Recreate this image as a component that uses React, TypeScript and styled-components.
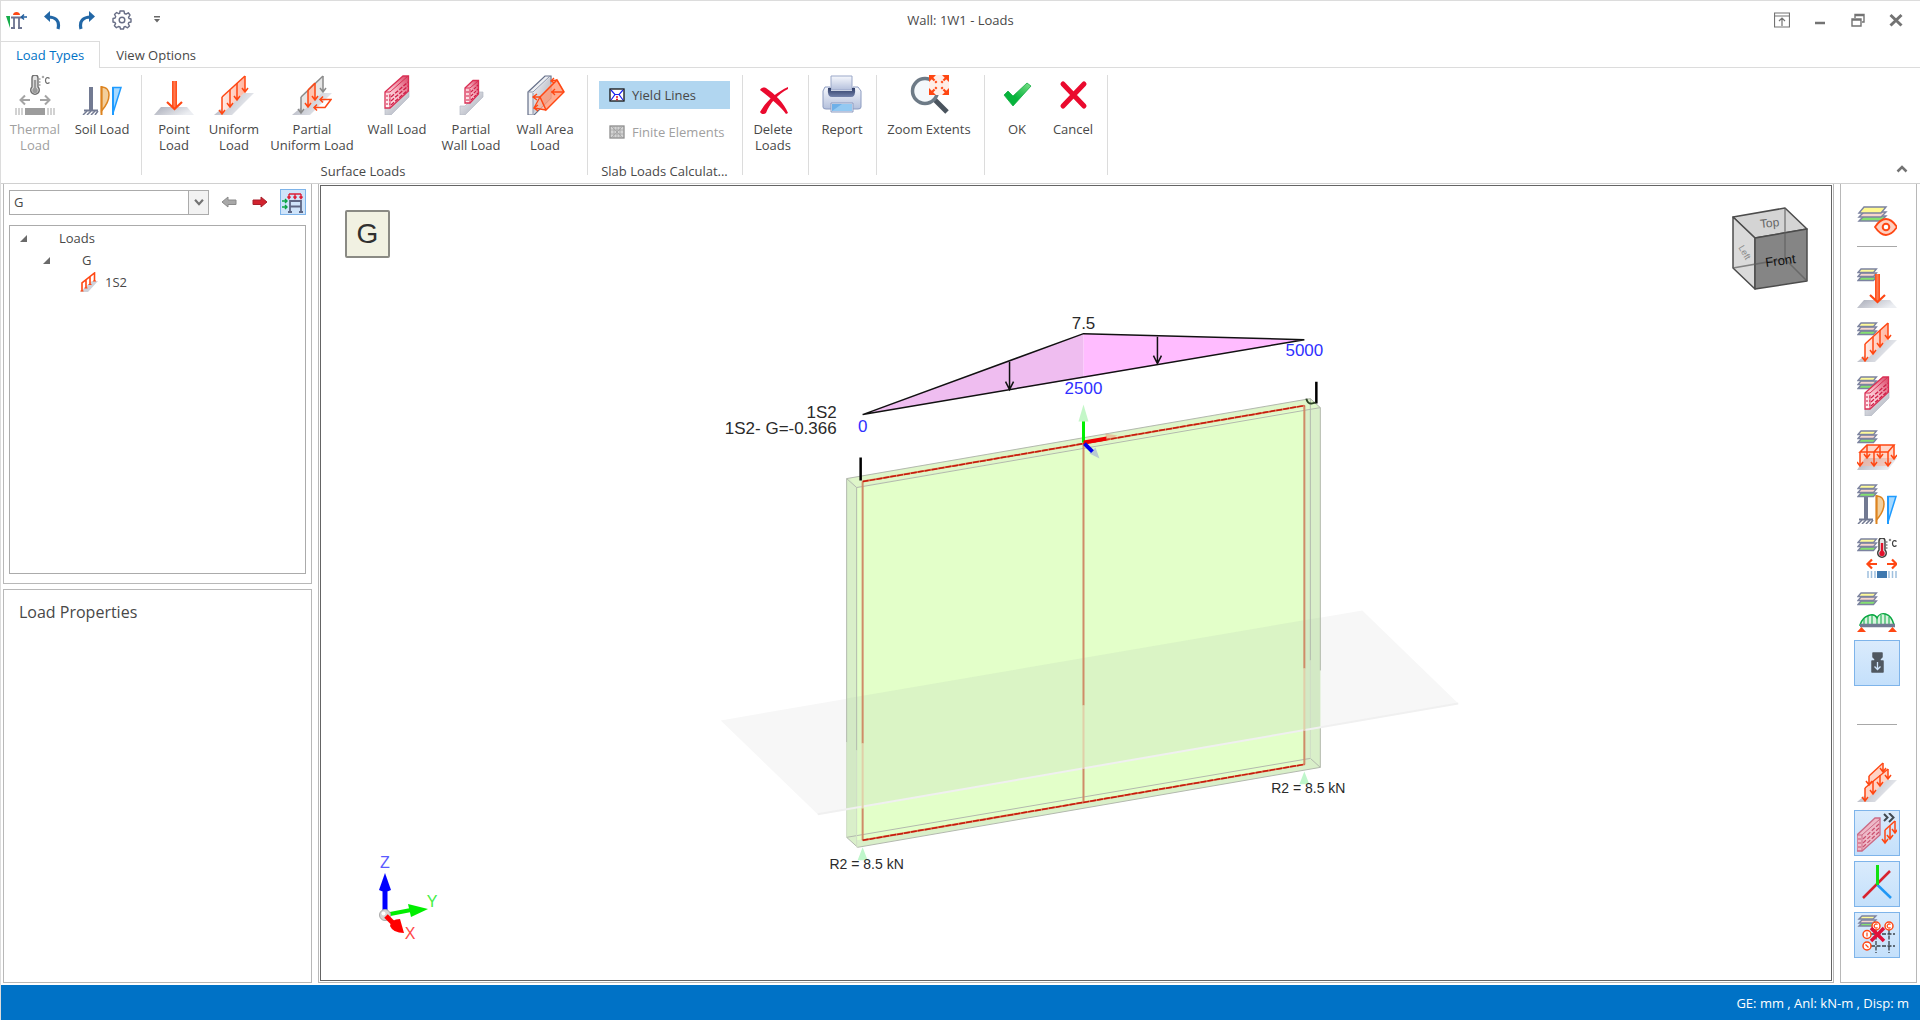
import React from "react";
import styled, { createGlobalStyle, css } from "styled-components";

const GlobalStyle = createGlobalStyle`
  *, *::before, *::after { box-sizing: border-box; }
  body {
    margin: 0;
    background: #ffffff;
    color: #484848;
    font-family: "Open Sans", "Noto Sans", sans-serif;
    font-size: 13px;
    line-height: 16px;
  }
  button, select { font: inherit; color: inherit; }
  svg { flex: none; }
`;

/* ---------- Window frame ---------- */

const Window = styled.div`
  display: flex;
  flex-direction: column;
  min-height: 100vh;
  border-top: 1px solid #dcdcdc;
  border-left: 1px solid #dcdcdc;
`;

const TitleBar = styled.header`
  display: grid;
  grid-template-columns: 1fr auto 1fr;
  align-items: center;
  height: 40px;
  padding: 0 12px 2px 4px;
`;

const QuickAccess = styled.div`
  display: flex;
  align-items: center;
  gap: 11px;
`;

const WindowTitle = styled.h1`
  margin: 0;
  padding-left: 8px;
  font-size: 13px;
  font-weight: 400;
  line-height: 16px;
`;

const WindowControls = styled.div`
  display: flex;
  justify-content: flex-end;
  gap: 14px;
`;

const FlatButton = styled.button`
  display: grid;
  place-items: center;
  width: 24px;
  height: 24px;
  padding: 0;
  border: 0;
  background: transparent;
`;

const TabStrip = styled.nav`
  display: flex;
  height: 27px;
  border-bottom: 1px solid #dcdcdc;
`;

const Tab = styled.button<{ $active?: boolean }>`
  height: 27px;
  padding: 0 16px;
  border: 0;
  background: transparent;
  ${(p) =>
    p.$active &&
    css`
      padding: 0 15px;
      border: solid #dcdcdc;
      border-width: 1px 1px 0 0;
      background: #ffffff;
      color: #0072c6;
    `}
`;

/* ---------- Ribbon ---------- */

const Ribbon = styled.section`
  display: flex;
  height: 116px;
  padding-top: 7px;
  border-bottom: 1px solid #d0d0d0;
`;

const Group = styled.div<{ $pad: string }>`
  display: flex;
  flex-direction: column;
  height: 104px;
  padding: ${(p) => p.$pad};
`;

const GroupButtons = styled.div`
  display: flex;
  flex: 1;
  align-items: flex-start;
`;

const GroupStack = styled.div`
  display: flex;
  flex: 1;
  flex-direction: column;
  gap: 9px;
  width: 131px;
  padding-top: 6px;
`;

const Caption = styled.div`
  text-align: center;
  white-space: nowrap;
`;

const Divider = styled.div`
  width: 1px;
  height: 100px;
  background: #dcdcdc;
`;

const LargeButton = styled.button<{ $width: number }>`
  display: flex;
  flex-direction: column;
  align-items: center;
  gap: 6px;
  width: ${(p) => p.$width}px;
  padding: 0;
  border: 0;
  background: transparent;
  line-height: 16px;
  white-space: pre;
  &:disabled { color: #a0a0a0; }
`;

const SmallButton = styled.button<{ $active?: boolean }>`
  display: flex;
  align-items: center;
  gap: 7px;
  height: 28px;
  padding: 0 0 0 10px;
  border: 0;
  background: ${(p) => (p.$active ? "#b1d6f0" : "transparent")};
  white-space: nowrap;
  &:disabled { color: #a0a0a0; }
`;

const CollapseSlot = styled.div`
  display: flex;
  flex: 1;
  align-items: flex-end;
  justify-content: flex-end;
  padding: 0 6px 2px 0;
`;

/* ---------- Work area ---------- */

const WorkArea = styled.main`
  display: flex;
  flex: 1;
  padding: 0 3px 2px 2px;
`;

const Sidebar = styled.aside`
  display: flex;
  flex: none;
  flex-direction: column;
  gap: 5px;
  width: 309px;
`;

const Panel = styled.section`
  border: 1px solid #b8b8b8;
`;

const LoadPanel = styled(Panel)`
  display: flex;
  flex: 405;
  flex-direction: column;
  gap: 10px;
  padding: 5px 5px 9px;
  border-top: 0;
`;

const PropertiesPanel = styled(Panel)`
  flex: 390;
  padding: 11px 15px;
`;

const PanelTitle = styled.h2`
  margin: 0;
  font-size: 16px;
  font-weight: 400;
  line-height: 22px;
`;

const CaseBar = styled.div`
  display: flex;
  align-items: center;
  gap: 10px;
`;

const ComboBox = styled.div`
  position: relative;
  flex: none;
  width: 200px;
  height: 25px;
  border: 1px solid #ababab;
`;

const ComboSelect = styled.select`
  width: 100%;
  height: 100%;
  padding: 0 4px;
  border: 0;
  background: #ffffff;
  appearance: none;
`;

const ComboArrow = styled.span`
  position: absolute;
  top: 0;
  right: 0;
  display: grid;
  place-items: center;
  width: 20px;
  height: 100%;
  border-left: 1px solid #ababab;
  background: #f2f2f2;
  pointer-events: none;
`;

const ToggleButton = styled(FlatButton)`
  flex: none;
  width: 26px;
  height: 26px;
  margin-left: auto;
  border: 1px solid #7eb4ea;
  background: #cfe4fa;
`;

const Tree = styled.ul`
  flex: 1;
  margin: 0;
  padding: 1px 0;
  border: 1px solid #ababab;
  list-style: none;
`;

const TreeRow = styled.li<{ $level: number }>`
  display: flex;
  align-items: center;
  gap: ${(p) => (p.$level === 2 ? 6 : 32)}px;
  height: 22px;
  padding-left: ${(p) => [9, 32, 69][p.$level]}px;
`;

const ViewFrame = styled.section`
  position: relative;
  flex: 1;
  display: flex;
  min-width: 0;
  margin: 0 6px;
  padding: 1px;
  border: 1px solid #b8b8b8;
  border-top: 0;
`;

const Viewport = styled.div`
  position: relative;
  flex: 1;
  min-width: 0;
  border: 1px solid #646464;
`;

const Scene = styled.svg`
  position: absolute;
  inset: 0;
  width: 100%;
  height: 100%;
`;

const CaseBadge = styled.div`
  position: absolute;
  top: 24px;
  left: 24px;
  display: grid;
  place-items: center;
  width: 45px;
  height: 48px;
  border: 2px solid #8a8a84;
  border-radius: 2px;
  background: #f1f1e2;
  color: #303030;
  font-family: "Liberation Sans", Arial, sans-serif;
  font-size: 28px;
  line-height: 32px;
`;

const CubeOverlay = styled.svg`
  position: absolute;
  top: 18px;
  right: 22px;
`;

const TriadOverlay = styled.svg`
  position: absolute;
  bottom: 34px;
  left: 50px;
`;

/* ---------- Right toolbar ---------- */

const ToolPanel = styled(Panel)`
  display: flex;
  flex: none;
  flex-direction: column;
  align-items: center;
  width: 77px;
  padding: 14px 3px 0 0;
  border-top: 0;
`;

const ToolGroup = styled.div<{ $gap: number }>`
  display: flex;
  flex-direction: column;
  gap: ${(p) => p.$gap}px;
  & + & { margin-top: 5px; }
`;

const ToolRule = styled.hr<{ $space: string }>`
  width: 40px;
  height: 1px;
  margin: ${(p) => p.$space};
  border: 0;
  background: #a8a8a8;
`;

const ToolButton = styled.button<{ $active?: boolean }>`
  display: grid;
  place-items: center;
  width: 46px;
  height: 46px;
  padding: 0;
  border: 1px solid ${(p) => (p.$active ? "#7eb4ea" : "transparent")};
  background: ${(p) => (p.$active ? "linear-gradient(#daebfc, #c4e0fb)" : "transparent")};
`;

const StatusBar = styled.footer`
  display: flex;
  align-items: center;
  justify-content: flex-end;
  height: 35px;
  padding: 0 11px;
  background: #0072c6;
  color: #ffffff;
`;

/* ---------- Icon parts ---------- */

const ORANGE = "#ff4713";
const ICON_FONT = '"Liberation Sans", Arial, sans-serif';

const Icon = ({ size = 40, children }: { size?: number; children: React.ReactNode }) => (
  <svg width={size} height={size} viewBox="0 0 40 40" fill="none" aria-hidden="true">
    {children}
  </svg>
);

const HiddenSvg = styled.svg`
  position: absolute;
`;

const SharedDefs = () => (
  <HiddenSvg width="0" height="0" aria-hidden="true">
    <defs>
      <linearGradient id="plate" x1="0" x2="1" y1="0" y2="0.4">
        <stop offset="0" stopColor="#a9acb8" />
        <stop offset="1" stopColor="#eceef2" />
      </linearGradient>
      <linearGradient id="brick" x1="0" x2="1" y1="1" y2="0">
        <stop offset="0" stopColor="#ffffff" />
        <stop offset="0.5" stopColor="#f7b4c2" />
        <stop offset="1" stopColor="#d94666" />
      </linearGradient>
      <linearGradient id="steel" x1="0" x2="1" y1="0" y2="1">
        <stop offset="0" stopColor="#f4f5f8" />
        <stop offset="1" stopColor="#a4a8b4" />
      </linearGradient>
      <linearGradient id="fade" x1="0" x2="1">
        <stop offset="0" stopColor="#ff4713" stopOpacity="0.1" />
        <stop offset="1" stopColor="#ff4713" stopOpacity="0.4" />
      </linearGradient>
      <linearGradient id="shaft" x1="0" x2="1">
        <stop offset="0" stopColor="#ff4713" />
        <stop offset="0.5" stopColor="#ff7a50" />
        <stop offset="1" stopColor="#ff4713" />
      </linearGradient>
      <linearGradient id="tick" x1="0" x2="1" y1="1" y2="0">
        <stop offset="0.4" stopColor="#06b43c" />
        <stop offset="1" stopColor="#7fe08a" />
      </linearGradient>
      <linearGradient id="print" x1="0" x2="0" y1="0" y2="1">
        <stop offset="0" stopColor="#f6f8fd" />
        <stop offset="1" stopColor="#b4c0dc" />
      </linearGradient>
      <linearGradient id="roller" x1="0" x2="0" y1="0" y2="1">
        <stop offset="0" stopColor="#2d3c66" />
        <stop offset="1" stopColor="#7382ab" />
      </linearGradient>
    </defs>
  </HiddenSvg>
);

const DownArrow = ({ x, y1, y2, color = ORANGE }: { x: number; y1: number; y2: number; color?: string }) => (
  <path d={`M${x} ${y1}V${y2}M${x - 3} ${y2 - 4}L${x} ${y2}L${x + 3} ${y2 - 4}`} stroke={color} strokeWidth="1.5" />
);

const Layers = () => (
  <g stroke="#7c83a0" strokeWidth="1.3">
    <path d="M1 12.500L4 9H19.500L16.500 12.500Z" fill="#84e070" />
    <path d="M1 8.500L4 5H19.500L16.500 8.500Z" fill="#f6d6cc" />
    <path d="M1 4.500L4 1H19.500L16.500 4.500Z" fill="#fffb9a" />
  </g>
);

const LineLoad = () => (
  <g>
    <path d="M0 40L26 18H40L18 40Z" fill="url(#plate)" />
    <path d="M8 22L31 1V17L8 39Z" fill="#fff" />
    <path d="M8 22L31 1V17L8 39Z" fill="url(#fade)" />
    <path d="M8 22L31 1" stroke={ORANGE} strokeWidth="1.5" />
    <DownArrow x={8} y1={22} y2={39} />
    <DownArrow x={16} y1={15} y2={32} />
    <DownArrow x={23} y1={8} y2={25} />
    <DownArrow x={31} y1={1} y2={17} />
  </g>
);

const BrickWall = () => (
  <g>
    <path d="M8 33L12 34L32 16V22L14 40H8Z" fill="url(#steel)" stroke="#b6bac6" strokeWidth="0.7" />
    <path d="M8 17L26 1H31.500V16L13 33H8Z" fill="url(#brick)" stroke="#d92f54" strokeWidth="1.3" />
    <path d="M13 19V33M8 17H13L31 1" stroke="#d92f54" />
    <path d="M14 22L31 7M14 26L31 11M14 30L31 15" stroke="#cf1f48" strokeWidth="1.3" strokeDasharray="4 1.5" />
    <path d="M9 21H13M9 25H13M9 29H13" stroke="#cf1f48" strokeDasharray="2 1" />
  </g>
);

const SoilShapes = () => (
  <g>
    <path d="M9 12V35" stroke="#727a92" strokeWidth="4" />
    <path d="M2 35.500H16" stroke="#727a92" strokeWidth="2" />
    <path d="M5 36L1 40M9 36L5 40M13 36L9 40M16 36L13 40" stroke="#727a92" strokeWidth="1.5" />
    <path d="M19.500 12C25 12 27 16 27 20C27 26 23 32 19.500 36V12Z" fill="#f3cf9c" stroke="#dd8420" strokeWidth="1.5" />
    <path d="M19.500 11V40" stroke="#dd8420" strokeWidth="2" />
    <path d="M31 12.500H39L31 38Z" fill="#a6d9ff" stroke="#1e9bff" strokeWidth="1.5" />
    <path d="M31 12V40" stroke="#1e9bff" strokeWidth="2" />
  </g>
);

const Thermometer = ({ x, fluid, line }: { x: number; fluid: string; line: string }) => (
  <g>
    <path
      d={`M${x - 3} 3A3 3 0 0 1 ${x + 3} 3V12A4.300 4.300 0 1 1 ${x - 3} 12Z`}
      fill="#e4e4e4"
      stroke={line}
      strokeWidth="1.400"
    />
    <path d={`M${x} 5V15`} stroke={fluid} strokeWidth="2.400" />
    <circle cx={x} cy="15.500" r="2.700" fill={fluid} />
    <path d={`M${x + 4} 4H${x + 5.5}M${x + 4} 7H${x + 5.5}M${x + 4} 10H${x + 5.5}`} stroke={line} />
    <circle cx={x + 8} cy="2" r="0.800" stroke={line} strokeWidth="0.700" />
    <path d={`M${x + 14.5} 3.500C${x + 12.5} 1.500 ${x + 10.5} 3 ${x + 10.5} 5.500C${x + 10.5} 8 ${x + 12.5} 9.500 ${x + 14.5} 7.500`} stroke={line} strokeWidth="1.200" />
  </g>
);

const ThermalIcon = () => (
  <Icon>
    <Thermometer x={20} fluid="#9a9a9a" line="#6e6e6e" />
    <path d="M15 25H6M10 20.500L5.500 25L10 29.500M25 25H34M30 20.500L34.500 25L30 29.500" stroke="#a4a4a4" strokeWidth="2" />
    <path d="M10 36.500H30" stroke="#9c9c9c" strokeWidth="7" />
    <path d="M1 33V40M4 33V40M7 33V40M33 33V40M36 33V40M39 33V40" stroke="#c4c4c4" strokeWidth="1.500" />
  </Icon>
);

const SoilIcon = () => (
  <Icon>
    <SoilShapes />
  </Icon>
);

const PointShapes = () => (
  <g>
    <path d="M7 32H33L40 40H0Z" fill="url(#plate)" />
    <path d="M18 6H23V33H18Z" fill="url(#shaft)" />
    <path d="M13 27L20.500 34L28 27" stroke={ORANGE} strokeWidth="2.200" />
  </g>
);

const PointIcon = () => (
  <Icon>
    <PointShapes />
  </Icon>
);

const UniformIcon = ({ size = 40 }: { size?: number }) => (
  <Icon size={size}>
    <LineLoad />
  </Icon>
);

/* Same load at tree size, with heavier strokes so it stays legible. */
const TreeLoadIcon = () => (
  <svg width="20" height="20" viewBox="0 0 20 20" fill="none" aria-hidden="true">
    <path d="M1 20L13 9H19L9 20Z" fill="#cfd2da" />
    <path d="M3 19V11L15.500 1V9M7 16V8M11 13V5" stroke={ORANGE} strokeWidth="1.600" />
    <path d="M1.500 19H4.500M5.500 16H8.500M9.500 12.500H12.500M14 9H17" stroke={ORANGE} />
  </svg>
);

const PartialUniformIcon = () => (
  <Icon>
    <path d="M0 40L26 18H40L18 40Z" fill="url(#plate)" />
    <path d="M9 22L31 1V17L9 38Z" fill="#e6e6e6" />
    <path d="M16 15L23 8V25L16 32Z" fill="#ffc3b0" />
    <path d="M9 22L31 1" stroke="#8a8a8a" strokeWidth="1.500" />
    <path d="M16 15L23 8" stroke={ORANGE} strokeWidth="1.500" />
    <DownArrow x={9} y1={22} y2={38} color="#8a8a8a" />
    <DownArrow x={31} y1={1} y2={17} color="#8a8a8a" />
    <DownArrow x={16} y1={15} y2={32} />
    <DownArrow x={23} y1={8} y2={25} />
    <path d="M28 24.500H39L33 32.500H22M31 21.500L28 24.500L31 27.500M25 29.500L22 32.500L25 35.500" stroke={ORANGE} strokeWidth="1.500" />
  </Icon>
);

const WallLoadIcon = () => (
  <Icon>
    <BrickWall />
  </Icon>
);

const PartialWallIcon = () => (
  <Icon>
    <path d="M9 31H14L28 17H32V22L14 40H9Z" fill="url(#steel)" stroke="#b6bac6" strokeWidth="0.700" />
    <path d="M14 13L22 5.500H27.500V19L19 28H14Z" fill="url(#brick)" stroke="#d92f54" strokeWidth="1.300" />
    <path d="M14 13H19L27 6M19 14V28" stroke="#d92f54" />
    <path d="M20 17L27 10M20 21L27 14M20 25L27 18M15 17H19M15 21H19M15 25H19" stroke="#cf1f48" strokeWidth="1.200" strokeDasharray="3 1" />
  </Icon>
);

const WallAreaIcon = () => (
  <Icon>
    <path d="M3 17L20 1H26V23L9 40H3Z" fill="#eef0f4" stroke="#667089" strokeWidth="1.200" />
    <path d="M8 18L25 2V23L8 39Z" fill="url(#steel)" />
    <path d="M8 18V39M3 17H8L25 1" stroke="#8e96aa" />
    <path d="M15 22L28 6L33 5L39 17L21 35L9 33Z" fill="#ffb297" fillOpacity="0.700" />
    <path d="M15 22L32 5L39 17L21 35Z" fill="#ff8a63" fillOpacity="0.450" stroke={ORANGE} strokeWidth="1.500" />
    <path d="M15 22H8M21 35L9 33L15 22M32 5L26 6M39 17H26M12 19L8 22L12 25M13 30L9 33L13 36M29 3L26 6L29 8M30 14L27 17L30 20" stroke={ORANGE} strokeWidth="1.300" />
  </Icon>
);

const YieldIcon = () => (
  <svg width="16" height="16" viewBox="0 0 16 16" fill="none" aria-hidden="true">
    <rect x="1" y="2" width="14" height="12" fill="#fff" stroke="#111" strokeWidth="1.300" />
    <path d="M2 3L6 7.500L2 13M14 3L10 7.500L14 13M6 7.500H10" stroke="#1d22f0" strokeWidth="1.200" />
    <path d="M8 9V11M7 12.500H9" stroke="#e3122c" strokeWidth="1.500" />
  </svg>
);

const MeshIcon = () => (
  <svg width="16" height="16" viewBox="0 0 16 16" fill="none" aria-hidden="true">
    <rect x="1" y="2" width="14" height="12" fill="#d4d4d4" stroke="#8e8e8e" strokeWidth="1.300" />
    <path d="M1 6H15M1 10H15M5 2V14M8 2V14M11 2V14M2 2L14 14M14 2L2 14" stroke="#9e9e9e" strokeWidth="0.700" />
  </svg>
);

const DeleteIcon = () => (
  <Icon>
    <path d="M7 15C8 13 10 12 13 13C22 19 31 28 35 38L33 39C27 31 17 23 7 15Z" fill="#ea0a2e" />
    <path d="M35 12C24 17 14 25 7 37C8 39 11 40 13 38C17 28 25 19 35 14Z" fill="#ea0a2e" />
  </Icon>
);

const PrinterIcon = () => (
  <Icon>
    <path d="M3 12H8V21H31V12H36L39 16V32Q39 34 36 34H4Q1 34 1 32V16Z" fill="url(#print)" stroke="#8c9bc0" />
    <path d="M9 1H30V15H9Z" fill="url(#print)" stroke="#9aa7c8" />
    <path d="M6 13H9V16H30V13H33Q34 22 29 22H10Q5 22 6 13Z" fill="url(#roller)" />
    <path d="M9 28H31V37H9Z" fill="#e9eefa" stroke="#8c9bc0" />
    <path d="M10 29H30V36H10Z" fill="#6eb0e8" />
    <path d="M10 36L20 29H30V36Z" fill="#93c9f2" />
  </Icon>
);

const ZoomIcon = () => (
  <Icon>
    <path d="M25 24L38 37" stroke="#4a545e" strokeWidth="5" />
    <circle cx="16" cy="16" r="12.500" fill="#f4f8fb" stroke="#6d7a86" strokeWidth="3.500" />
    <path d="M20 0H40V20H20Z" fill="#ffeee8" />
    <path d="M20 0H27L20 7ZM40 0H33L40 7ZM20 20H27L20 13ZM40 20H33L40 13Z" fill={ORANGE} />
    <path d="M22 2L28 8M38 2L32 8M22 18L28 12M38 18L32 12" stroke={ORANGE} strokeWidth="2.200" strokeDasharray="5 1 2" />
  </Icon>
);

const OkIcon = () => (
  <Icon>
    <path d="M7 20L11 16L16 21L30 8L34 11L16 31Z" fill="url(#tick)" stroke="#14ad43" strokeWidth="0.800" />
  </Icon>
);

const CancelIcon = () => (
  <Icon>
    <path d="M10 9L31 31M31 9L10 31" stroke="#ea0a2e" strokeWidth="5" strokeLinecap="round" />
  </Icon>
);

/* ---------- Right toolbar icons ---------- */

const LayersEyeIcon = () => (
  <Icon>
    <g stroke="#7c83a0" strokeWidth="1.400">
      <path d="M2 20L7 15H29L24 20Z" fill="#84e070" />
      <path d="M2 16L7 11H29L24 16Z" fill="#f6d6cc" />
      <path d="M2 12L7 6H29L24 12Z" fill="#fff98f" />
    </g>
    <path d="M18 26C22 20 25 18 29 18S36 20 40 26C36 32 33 34 29 34S22 32 18 26Z" fill="#ffd0c0" stroke={ORANGE} strokeWidth="1.800" />
    <circle cx="29" cy="26" r="3.300" fill="#fff" stroke={ORANGE} strokeWidth="2" />
  </Icon>
);

const LayersPointIcon = () => (
  <Icon>
    <Layers />
    <PointShapes />
  </Icon>
);

const LayersUniformIcon = () => (
  <Icon>
    <Layers />
    <LineLoad />
  </Icon>
);

const LayersWallIcon = () => (
  <Icon>
    <Layers />
    <BrickWall />
  </Icon>
);

const LayersSlabIcon = () => (
  <Icon>
    <Layers />
    <path d="M0 40L8 28H40L31 40Z" fill="url(#plate)" />
    <path d="M3 22L10 15H37V29L31 36H3Z" fill="#ffb59d" fillOpacity="0.550" />
    <path d="M3 22L10 15H37L31 22ZM17 22L23 15" stroke={ORANGE} strokeWidth="1.500" />
    <DownArrow x={3} y1={22} y2={36} />
    <DownArrow x={17} y1={22} y2={36} />
    <DownArrow x={31} y1={22} y2={36} />
    <DownArrow x={10} y1={15} y2={28} />
    <DownArrow x={23} y1={15} y2={28} />
    <DownArrow x={37} y1={15} y2={29} />
  </Icon>
);

const LayersSoilIcon = () => (
  <Icon>
    <SoilShapes />
    <Layers />
  </Icon>
);

const LayersThermalIcon = () => (
  <Icon>
    <Layers />
    <Thermometer x={25} fluid="#e3122c" line="#3c3c3c" />
    <path d="M20 26H11M15 21.500L10.500 26L15 30.500M30 26H39M35 21.500L39.500 26L35 30.500" stroke={ORANGE} strokeWidth="2.200" />
    <path d="M20 36.500H30" stroke="#3f78ae" strokeWidth="7" />
    <path d="M11 33V40M14.500 33V40M18 33V40M32 33V40M35.500 33V40M39 33V40" stroke="#9fc0de" strokeWidth="1.500" />
  </Icon>
);

const LayersBridgeIcon = () => (
  <Icon>
    <Layers />
    <path d="M3 33C6 23 17 20 20 26C23 19 34 20 37 33Z" fill="#d8f3de" stroke="#0aa842" strokeWidth="1.500" />
    <path d="M7 27V33M11 24V33M15 23V33M20 26V33M24 23V33M28 22V33M32 25V33" stroke="#0aa842" />
    <path d="M3 33.500H38" stroke="#727a92" strokeWidth="3.500" />
    <path d="M0 40L4.500 35L9 40ZM31 40L35.500 35L40 40Z" fill={ORANGE} />
  </Icon>
);

const WeightIcon = () => (
  <Icon>
    <path d="M16 10H25V14L23 16V18H26V29H15V18H18V16L16 14Z" fill="#505860" stroke="#505860" strokeWidth="1.500" strokeLinejoin="round" />
    <path d="M20.500 19V26M17.500 23.500L20.500 26.500L23.500 23.500" stroke="#cfe4fa" strokeWidth="1.300" />
  </Icon>
);

const DoubleLoadIcon = () => (
  <Icon>
    <path d="M0 40L26 18H40L18 40Z" fill="url(#plate)" />
    <path d="M12 14L26 1V10L12 23ZM8 26L31 7V17L8 39Z" fill="#ffd3c5" />
    <path d="M12 14L26 1M8 26L31 7" stroke={ORANGE} strokeWidth="1.400" />
    <DownArrow x={12} y1={14} y2={23} />
    <DownArrow x={26} y1={1} y2={10} />
    <DownArrow x={8} y1={26} y2={39} />
    <DownArrow x={16} y1={19} y2={32} />
    <DownArrow x={23} y1={13} y2={24} />
    <DownArrow x={31} y1={7} y2={17} />
  </Icon>
);

const WallToLineIcon = () => (
  <Icon>
    <path d="M0 22L18 5H23V22L5 38H0Z" fill="#eeb9c8" stroke="#cb6a85" strokeWidth="1.300" />
    <path d="M5 22V38M0 22H5L23 6" stroke="#cb6a85" />
    <path d="M6 26L22 11M6 30L22 15M6 34L22 19M1 26H4M1 30H4M1 34H4" stroke="#c9506f" strokeWidth="1.200" strokeDasharray="4 2" />
    <path d="M27 1L30.500 4.500L27 8M32 0L36.500 4.500L32 9" stroke="#424a52" strokeWidth="2" />
    <path d="M28 17L38 8" stroke={ORANGE} strokeWidth="1.500" />
    <DownArrow x={28} y1={17} y2={30} />
    <DownArrow x={33} y1={13} y2={26} />
    <DownArrow x={38} y1={8} y2={20} />
  </Icon>
);

const AxesIcon = () => (
  <Icon>
    <path d="M33 7L6 34" stroke="#d8232f" strokeWidth="2.500" />
    <path d="M20.500 21L34 34" stroke="#1f97f5" strokeWidth="2.500" />
    <path d="M20.500 1V21" stroke="#12e112" strokeWidth="3" />
  </Icon>
);

const GridOffIcon = () => (
  <Icon>
    <g stroke="#7c83a0" strokeWidth="1.300">
      <path d="M2 11L5 8H19L16 11Z" fill="#84e070" />
      <path d="M2 8L5 5H19L16 8Z" fill="#f6d6cc" />
      <path d="M2 4L5 1H19L16 4Z" fill="#fffb9a" />
    </g>
    <path d="M14 19H38M14 31H38M19 15V38M32 15V38" stroke="#39414a" strokeWidth="1.300" strokeDasharray="4 1.500" />
    <g fill="#fff" stroke={ORANGE} strokeWidth="1.500">
      <circle cx="19" cy="11" r="4" />
      <circle cx="32" cy="11" r="4" />
      <circle cx="10" cy="19.500" r="4" />
      <circle cx="10" cy="31" r="4" />
    </g>
    <path d="M20.500 9.500A2 2 0 1 0 20.500 12.500M33.500 9.500A2 2 0 1 0 33.500 12.500M10 17.500V21.500M8.500 29.500L11.500 32.500" stroke={ORANGE} strokeWidth="1.200" />
    <path d="M14 13L27 26M27 13L14 26" stroke="#e0103a" strokeWidth="3.500" />
  </Icon>
);

/* ---------- Title bar icons ---------- */

const AppIcon = () => (
  <svg width="22" height="20" viewBox="0 0 22 20" fill="none" aria-hidden="true">
    <path d="M0 6H4V18Z" fill="#16ad4b" />
    <path d="M5 7.500H16M8 8V18M13 8V18M5 18H9M12 18H16" stroke="#6c7390" strokeWidth="1.800" />
    <path d="M7 5C7 1 14 1 14 5Z" fill={ORANGE} />
    <path d="M21 7H15M18 4.500L15.500 7L18 9.500" stroke="#215f9e" strokeWidth="1.500" />
  </svg>
);

const UndoIcon = ({ flip }: { flip?: boolean }) => (
  <svg width="18" height="20" viewBox="0 0 18 20" fill="none" aria-hidden="true">
    <path d={flip ? "M3 19C1 11 5 7 13 7" : "M15 19C17 11 13 7 5 7"} stroke="#2267a6" strokeWidth="3.200" />
    <path d={flip ? "M11 1L17 6.500L11 12Z" : "M7 1L1 6.500L7 12Z"} fill="#2267a6" />
  </svg>
);

const GearIcon = () => (
  <svg width="20" height="20" viewBox="0 0 20 20" fill="none" stroke="#686e86" strokeWidth="1.400" strokeLinejoin="round" aria-hidden="true">
    <path d="M8 1H12L12.500 3.500L14 4.200L16.300 2.800L18 5L16.500 7.300L17 8.500L19 9V12L16.800 12.500L16.300 13.800L17.500 16L15.500 17.800L13.400 16.500L12 17L11.500 19H8.500L8 17L6.500 16.500L4.400 17.700L2.400 15.700L3.600 13.600L3 12.500L1 12V8.500L3.100 8L3.700 6.500L2.500 4.500L4.600 2.500L6.700 3.700L7.700 3.300Z" />
    <circle cx="10" cy="10" r="2.800" />
  </svg>
);

const MenuArrowIcon = () => (
  <svg width="8" height="8" viewBox="0 0 8 8" aria-hidden="true">
    <path d="M1 0H7V1.500H1ZM1 3H7L4 6.500Z" fill="#686868" />
  </svg>
);

const ControlIcon = ({ path, width = 1.5, size = 16 }: { path: string; width?: number; size?: number }) => (
  <svg width={size} height={size} viewBox="0 0 16 16" fill="none" aria-hidden="true">
    <path d={path} stroke="#737373" strokeWidth={width} />
  </svg>
);

const ArrowIcon = ({ color, edge, flip }: { color: string; edge: string; flip?: boolean }) => (
  <svg width="16" height="14" viewBox="0 0 16 14" aria-hidden="true">
    <path
      d={flip ? "M1 7L7 2V5H15V9.500H7V12Z" : "M15 7L9 2V5H1V9.500H9V12Z"}
      fill={color}
      stroke={edge}
    />
  </svg>
);

const FrameLoadIcon = () => (
  <svg width="22" height="22" viewBox="0 0 22 22" fill="none" aria-hidden="true">
    <path d="M7 3H19M7 3V7M13 3V7M19 3V7M5.500 5.500L7 7.500L8.500 5.500M11.500 5.500L13 7.500L14.500 5.500M17.500 5.500L19 7.500L20.500 5.500" stroke="#dd2038" strokeWidth="1.400" />
    <path d="M8 21V10H19V21M8 15.500H19M6 21H10M17 21H21" stroke="#5e6784" strokeWidth="1.800" />
    <path d="M0 10H5M3 8L5 10L3 12M0 16H5M3 14L5 16L3 18" stroke="#0ba545" strokeWidth="1.400" />
  </svg>
);

const Expander = () => (
  <svg width="8" height="8" viewBox="0 0 8 8" aria-hidden="true">
    <path d="M8 1V8H1Z" fill="#6a6a6a" />
  </svg>
);

/* ---------- 3D view ---------- */

const WallScene = () => (
  <Scene viewBox="321 186 1511 793" fontFamily={ICON_FONT} role="img" aria-label="Wall 1W1 with loads">
    {/* ground plane */}
    <path d="M721 720L1363 610L1459 703L818 814Z" fill="#f7f7f7" />

    {/* wall solid */}
    <path d="M847 478L1311 398L1321 407V767L858 847L847 837Z" fill="#d9efc9" />
    <path d="M850 478L1311 399L1319 407L857 486Z" fill="#dff6c9" />
    <path d="M857 487L1305 408V764L857 840Z" fill="#e3ffc9" />
    <path d="M847 698L1321 617V727L847 809Z" fill="#c8e0bc" fillOpacity="0.350" />
    <g fill="none" stroke="#b3b9ae">
      <path d="M847 478L1311 398L1321 407L857 487ZM847 478V742M857 487V750M1321 407V670M1311 398V660" />
      <path d="M847 837L858 847L1321 767L1311 758ZM1321 727V767" />
      <path d="M847 742V837M857 750V847M1311 660V758" stroke="#cfdcc6" />
    </g>

    {/* plane front edge crossing the wall */}
    <path d="M818 814L1459 703" stroke="#f0f0f0" strokeWidth="2" />

    {/* wall axis lines */}
    <g fill="none" stroke="#cf8c68" strokeWidth="2">
      <path d="M863 481V743M1084 442V705M1305 405V668M1084 768V802M1305 730V764M863 808V840" />
      <path d="M863 743V808M1084 705V768M1305 668V730" stroke="#e0cfa8" />
    </g>
    <path d="M863 481L1305 405M863 840L1305 764" stroke="#e0805c" strokeWidth="2" />
    <path d="M863 481L1305 405M863 840L1305 764" stroke="#c41a0c" strokeWidth="1.500" strokeDasharray="6 1" />

    {/* end markers */}
    <path d="M861 457V480M1317 381V403" stroke="#000" strokeWidth="2.500" />
    <path d="M1307 398Q1308 403 1312 403L1316 402" fill="none" stroke="#2d4427" strokeWidth="2" />

    {/* load diagram */}
    <path d="M863 414L1084 333V377Z" fill="#efbdf0" />
    <path d="M1084 333L1305 339L1084 377Z" fill="#ffbcff" />
    <g fill="none" stroke="#111" strokeWidth="1.500">
      <path d="M863 414L1084 333L1305 339Z" />
      <path d="M1010 361V389M1006 381L1010 389L1014 381M1158 336V363M1154 355L1158 363L1162 355" />
    </g>

    {/* local axes */}
    <path d="M1084 442V420" stroke="#00f000" strokeWidth="3" />
    <path d="M1079 421L1084 404L1089 421Z" fill="#c4f7c8" />
    <path d="M1084 440L1107 436L1107 440L1084 444Z" fill="#ee0000" />
    <path d="M1106 433L1118 435L1107 441Z" fill="#ee7050" fillOpacity="0.350" />
    <path d="M1090 453L1096 447L1100 458Z" fill="#b9cbd0" />
    <path d="M1085 443L1093 451" stroke="#0000f0" strokeWidth="4" />

    {/* supports */}
    <path d="M858 860L863 847L868 860ZM1300 784L1305 771L1310 784Z" fill="#bff6cb" />

    <g fill="#2a2a2a" fontSize="17" textAnchor="end">
      <text x="837" y="417">1S2</text>
      <text x="837" y="433">1S2- G=-0.366</text>
    </g>
    <g fontSize="17" textAnchor="middle">
      <text x="1084" y="328" fill="#2a2a2a">7.5</text>
      <g fill="#3030ff">
        <text x="863" y="431">0</text>
        <text x="1084" y="393">2500</text>
        <text x="1305" y="355">5000</text>
      </g>
    </g>
    <g fontSize="14" fill="#2a2a2a" textAnchor="middle">
      <text x="867" y="869">R2 = 8.5 kN</text>
      <text x="1309" y="793">R2 = 8.5 kN</text>
    </g>
  </Scene>
);

const ViewCube = () => (
  <CubeOverlay width="80" height="90" viewBox="1728 204 80 90" fontFamily={ICON_FONT} role="img" aria-label="View cube">
    <g stroke="#4c4c4c" strokeWidth="1.500" strokeLinejoin="round">
      <path d="M1732 217L1784 208L1806 229L1754 238Z" fill="#d4d4d4" />
      <path d="M1732 217L1754 238V289L1732 268Z" fill="#dadada" />
      <path d="M1754 238L1806 229V281L1754 289Z" fill="#858585" />
      <path d="M1784 208V259L1806 281M1784 259L1732 268" fill="none" stroke="#5c5c5c" strokeOpacity="0.700" />
    </g>
    <g textAnchor="middle">
      <text transform="translate(1769 227) rotate(-6)" fontSize="12" fill="#666">Top</text>
      <text transform="translate(1780 265) rotate(-8)" fontSize="13" fill="#111">Front</text>
      <text transform="translate(1741 254) rotate(60)" fontSize="9" fill="#8a8a8a">Left</text>
    </g>
  </CubeOverlay>
);

const AxisTriad = () => (
  <TriadOverlay width="72" height="96" viewBox="371 850 72 96" fontFamily={ICON_FONT} fontSize="16" role="img" aria-label="Axes">
    <path d="M385 915V888" stroke="#0000ff" strokeWidth="5" />
    <path d="M379 890L385 873L391 890Q385 893 379 890Z" fill="#0000ff" />
    <path d="M385 915L411 910" stroke="#00ee00" strokeWidth="4" />
    <path d="M408 904L428 909L411 917Z" fill="#00ee00" />
    <circle cx="385" cy="915" r="5.500" fill="#d6d6d6" stroke="#aaa" />
    <circle cx="383.500" cy="913.500" r="2" fill="#fff" />
    <path d="M386 916L394 924" stroke="#ff0000" strokeWidth="5" />
    <path d="M390 926Q391 919 400 919L404 933Q393 933 390 926Z" fill="#ff0000" />
    <g textAnchor="middle">
      <text x="385" y="868" fill="#5a5aff">Z</text>
      <text x="432" y="907" fill="#44ee44">Y</text>
      <text x="410" y="939" fill="#ff4848">X</text>
    </g>
  </TriadOverlay>
);

/* ---------- Data ---------- */

type RibbonItem = { label: string; icon: React.ReactNode; width: number; disabled?: boolean };
type RibbonGroup = { pad: string; caption?: string; items: RibbonItem[] };

const leadingGroups: RibbonGroup[] = [
  {
    pad: "0 2px 0 4px",
    items: [
      { label: "Thermal\nLoad", icon: <ThermalIcon />, width: 60, disabled: true },
      { label: "Soil Load", icon: <SoilIcon />, width: 74 },
    ],
  },
  {
    pad: "0 5px 0 2px",
    caption: "Surface Loads",
    items: [
      { label: "Point\nLoad", icon: <PointIcon />, width: 60 },
      { label: "Uniform\nLoad", icon: <UniformIcon />, width: 60 },
      { label: "Partial\nUniform Load", icon: <PartialUniformIcon />, width: 96 },
      { label: "Wall Load", icon: <WallLoadIcon />, width: 74 },
      { label: "Partial\nWall Load", icon: <PartialWallIcon />, width: 74 },
      { label: "Wall Area\nLoad", icon: <WallAreaIcon />, width: 74 },
    ],
  },
];

const trailingGroups: RibbonGroup[] = [
  { pad: "0 5px 0 0", items: [{ label: "Delete\nLoads", icon: <DeleteIcon />, width: 60 }] },
  { pad: "0 4px 0 3px", items: [{ label: "Report", icon: <PrinterIcon />, width: 60 }] },
  { pad: "0 7px 0 4px", items: [{ label: "Zoom Extents", icon: <ZoomIcon />, width: 96 }] },
  {
    pad: "0 6px 0 4px",
    items: [
      { label: "OK", icon: <OkIcon />, width: 56 },
      { label: "Cancel", icon: <CancelIcon />, width: 56 },
    ],
  },
];

const displayTools = [
  { name: "Point loads", icon: <LayersPointIcon /> },
  { name: "Line loads", icon: <LayersUniformIcon /> },
  { name: "Wall loads", icon: <LayersWallIcon /> },
  { name: "Area loads", icon: <LayersSlabIcon /> },
  { name: "Soil loads", icon: <LayersSoilIcon /> },
  { name: "Thermal loads", icon: <LayersThermalIcon /> },
  { name: "Bridge loads", icon: <LayersBridgeIcon /> },
];

const viewTools = [
  { name: "Stacked loads", icon: <DoubleLoadIcon />, active: false },
  { name: "Decomposed wall loads", icon: <WallToLineIcon />, active: true },
  { name: "Local axes", icon: <AxesIcon />, active: true },
  { name: "Hide grid", icon: <GridOffIcon />, active: true },
];

const RibbonGroups = ({ groups }: { groups: RibbonGroup[] }) => (
  <>
    {groups.map((group, i) => (
      <React.Fragment key={i}>
        <Group $pad={group.pad}>
          <GroupButtons>
            {group.items.map((item) => (
              <LargeButton key={item.label} type="button" $width={item.width} disabled={item.disabled}>
                {item.icon}
                <span>{item.label}</span>
              </LargeButton>
            ))}
          </GroupButtons>
          {group.caption && <Caption>{group.caption}</Caption>}
        </Group>
        <Divider />
      </React.Fragment>
    ))}
  </>
);

export default function App() {
  return (
    <Window>
      <GlobalStyle />
      <SharedDefs />
      <TitleBar>
        <QuickAccess>
          <FlatButton type="button" aria-label="Application"><AppIcon /></FlatButton>
          <FlatButton type="button" aria-label="Undo"><UndoIcon /></FlatButton>
          <FlatButton type="button" aria-label="Redo"><UndoIcon flip /></FlatButton>
          <FlatButton type="button" aria-label="Settings"><GearIcon /></FlatButton>
          <FlatButton type="button" aria-label="Customize"><MenuArrowIcon /></FlatButton>
        </QuickAccess>
        <WindowTitle>Wall: 1W1 - Loads</WindowTitle>
        <WindowControls>
          <FlatButton type="button" aria-label="Ribbon display"><ControlIcon path="M0.500 1H15.500V15H0.500ZM0.500 4H15.500M8 14V6M5 9L8 6L11 9" width={1.2} /></FlatButton>
          <FlatButton type="button" aria-label="Minimize"><ControlIcon path="M3 11H13" width={2.5} /></FlatButton>
          <FlatButton type="button" aria-label="Restore"><ControlIcon path="M2 7H11V14H2ZM2 8H11M5 6V2.500H14V10H12M5 3.500H14" width={1.4} /></FlatButton>
          <FlatButton type="button" aria-label="Close"><ControlIcon path="M2.500 3L13.500 13.500M13.500 3L2.500 13.500" width={3} /></FlatButton>
        </WindowControls>
      </TitleBar>
      <TabStrip>
        <Tab type="button" $active>Load Types</Tab>
        <Tab type="button">View Options</Tab>
      </TabStrip>
      <Ribbon>
        <RibbonGroups groups={leadingGroups} />
        <Group $pad="0 12px 0 11px">
          <GroupStack>
            <SmallButton type="button" $active><YieldIcon />Yield Lines</SmallButton>
            <SmallButton type="button" disabled><MeshIcon />Finite Elements</SmallButton>
          </GroupStack>
          <Caption>Slab Loads Calculat...</Caption>
        </Group>
        <Divider />
        <RibbonGroups groups={trailingGroups} />
        <CollapseSlot>
          <FlatButton type="button" aria-label="Collapse ribbon">
            <ControlIcon path="M3.500 10.500L8 6L12.500 10.500" width={2.5} />
          </FlatButton>
        </CollapseSlot>
      </Ribbon>
      <WorkArea>
        <Sidebar>
          <LoadPanel>
            <CaseBar>
              <ComboBox>
                <ComboSelect aria-label="Load case" defaultValue="G">
                  <option value="G">G</option>
                </ComboSelect>
                <ComboArrow>
                  <ControlIcon path="M3.500 5.500L8 10.500L12.500 5.500" width={2.5} size={14} />
                </ComboArrow>
              </ComboBox>
              <FlatButton type="button" aria-label="Previous case"><ArrowIcon color="#a8a8a8" edge="#8a8a8a" flip /></FlatButton>
              <FlatButton type="button" aria-label="Next case"><ArrowIcon color="#d2232e" edge="#a81f2a" /></FlatButton>
              <ToggleButton type="button" aria-label="All loads"><FrameLoadIcon /></ToggleButton>
            </CaseBar>
            <Tree>
              <TreeRow $level={0}><Expander />Loads</TreeRow>
              <TreeRow $level={1}><Expander />G</TreeRow>
              <TreeRow $level={2}><TreeLoadIcon />1S2</TreeRow>
            </Tree>
          </LoadPanel>
          <PropertiesPanel>
            <PanelTitle>Load Properties</PanelTitle>
          </PropertiesPanel>
        </Sidebar>
        <ViewFrame>
          <Viewport>
            <WallScene />
            <CaseBadge>G</CaseBadge>
            <ViewCube />
            <AxisTriad />
          </Viewport>
        </ViewFrame>
        <ToolPanel>
          <ToolButton type="button" aria-label="Layers"><LayersEyeIcon /></ToolButton>
          <ToolRule $space="2px 0 18px" />
          <ToolGroup $gap={8}>
            {displayTools.map((tool) => (
              <ToolButton key={tool.name} type="button" aria-label={tool.name}>{tool.icon}</ToolButton>
            ))}
          </ToolGroup>
          <ToolGroup $gap={5}>
            <ToolButton type="button" $active aria-label="Self weight"><WeightIcon /></ToolButton>
          </ToolGroup>
          <ToolRule $space="38px 0 34px" />
          <ToolGroup $gap={5}>
            {viewTools.map((tool) => (
              <ToolButton key={tool.name} type="button" $active={tool.active} aria-label={tool.name}>{tool.icon}</ToolButton>
            ))}
          </ToolGroup>
        </ToolPanel>
      </WorkArea>
      <StatusBar>GE: mm , Anl: kN-m , Disp: m</StatusBar>
    </Window>
  );
}
